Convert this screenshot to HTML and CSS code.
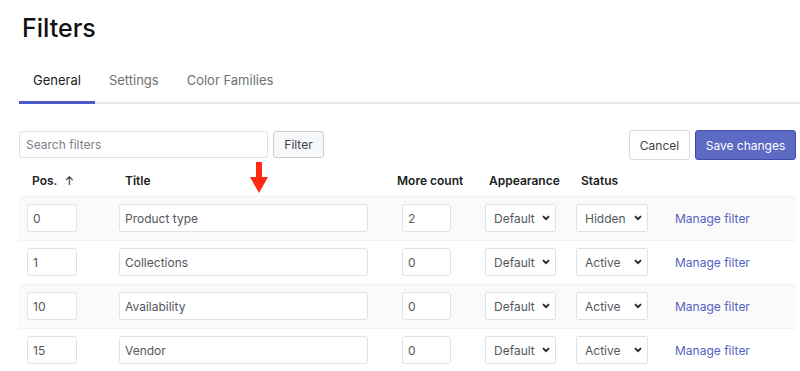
FILE: index.html
```html
<!DOCTYPE html>
<html lang="en">
<head>
  <meta charset="UTF-8" />
  <title>Filters</title>
  <meta name="viewport" content="width=device-width, initial-scale=1.0" />
  <link rel="stylesheet" href="styles.css">
</head>
<body>

  <div class="page">
    <h1>Filters</h1>

    <!-- Tabs -->
    <nav class="tabs">
      <a class="tab active">General</a>
      <a class="tab">Settings</a>
      <a class="tab">Color Families</a>
    </nav>

    <!-- Search + actions -->
    <div class="toolbar">
      <div class="search">
        <input type="text" placeholder="Search filters" />
        <button class="btn">Filter</button>
      </div>
      <div class="actions">
        <button class="btn btn-lg">Cancel</button>
        <button class="btn btn-lg btn-primary">Save changes</button>
      </div>
    </div>

    <div class="table-wrap">
      <svg class="pointer" width="18" height="31" viewBox="0 0 18 31">
        <rect x="6" y="0" width="6" height="16" fill="#ff2a14" />
        <polygon points="0,15 18,15 9,31" fill="#ff2a14" />
      </svg>

      <table class="filters">
        <thead>
          <tr>
            <th class="c-pos">Pos. <span class="sort">&#8593;</span></th>
            <th class="c-title">Title</th>
            <th class="c-more">More count</th>
            <th class="c-app">Appearance</th>
            <th class="c-status">Status</th>
            <th class="c-link"></th>
          </tr>
        </thead>
        <tbody>
          <tr>
            <td><input class="in-pos" value="0" /></td>
            <td><input class="in-title" value="Product type" /></td>
            <td><input class="in-more" value="2" /></td>
            <td>
              <span class="select sel-app">Default
                <svg viewBox="0 0 8 6" width="8" height="6"><path d="M1 1.2 L4 4.2 L7 1.2" /></svg>
              </span>
            </td>
            <td>
              <span class="select sel-status">Hidden
                <svg viewBox="0 0 8 6" width="8" height="6"><path d="M1 1.2 L4 4.2 L7 1.2" /></svg>
              </span>
            </td>
            <td><a class="manage">Manage filter</a></td>
          </tr>
          <tr>
            <td><input class="in-pos" value="1" /></td>
            <td><input class="in-title" value="Collections" /></td>
            <td><input class="in-more" value="0" /></td>
            <td>
              <span class="select sel-app">Default
                <svg viewBox="0 0 8 6" width="8" height="6"><path d="M1 1.2 L4 4.2 L7 1.2" /></svg>
              </span>
            </td>
            <td>
              <span class="select sel-status">Active
                <svg viewBox="0 0 8 6" width="8" height="6"><path d="M1 1.2 L4 4.2 L7 1.2" /></svg>
              </span>
            </td>
            <td><a class="manage">Manage filter</a></td>
          </tr>
          <tr>
            <td><input class="in-pos" value="10" /></td>
            <td><input class="in-title" value="Availability" /></td>
            <td><input class="in-more" value="0" /></td>
            <td>
              <span class="select sel-app">Default
                <svg viewBox="0 0 8 6" width="8" height="6"><path d="M1 1.2 L4 4.2 L7 1.2" /></svg>
              </span>
            </td>
            <td>
              <span class="select sel-status">Active
                <svg viewBox="0 0 8 6" width="8" height="6"><path d="M1 1.2 L4 4.2 L7 1.2" /></svg>
              </span>
            </td>
            <td><a class="manage">Manage filter</a></td>
          </tr>
          <tr>
            <td><input class="in-pos" value="15" /></td>
            <td><input class="in-title" value="Vendor" /></td>
            <td><input class="in-more" value="0" /></td>
            <td>
              <span class="select sel-app">Default
                <svg viewBox="0 0 8 6" width="8" height="6"><path d="M1 1.2 L4 4.2 L7 1.2" /></svg>
              </span>
            </td>
            <td>
              <span class="select sel-status">Active
                <svg viewBox="0 0 8 6" width="8" height="6"><path d="M1 1.2 L4 4.2 L7 1.2" /></svg>
              </span>
            </td>
            <td><a class="manage">Manage filter</a></td>
          </tr>
        </tbody>
      </table>
    </div>
  </div>

</body>
</html>
```

FILE: styles.css
```css
body {
  font-family: 'Inter', 'Noto Sans', sans-serif;
  background: #ffffff;
  color: #212b36;
  margin: 0;
}

.page {
  padding: 12px 4px 0 19px;
}

h1 {
  font-size: 25px;
  font-weight: 500;
  line-height: 32px;
  margin: 0 0 0 3px;
  color: #111;
}

/* tabs */
.tabs {
  display: flex;
  margin-top: 21px;
  border-bottom: 2px solid #e6e7e9;
  margin-right: -4px;
}

.tab {
  font-size: 13px;
  padding: 7px 14px 13px;
  color: #6d7175;
  margin-bottom: -2px;
  border-bottom: 3px solid transparent;
}

.tab.active {
  color: #202223;
  border-bottom-color: #4959c6;
}

/* toolbar */
.toolbar {
  display: flex;
  justify-content: space-between;
  align-items: flex-start;
  margin-top: 26px;
}

.search {
  display: flex;
  gap: 5px;
  padding-top: 1px;
}

.search input {
  width: 249px;
  height: 27px;
  box-sizing: border-box;
  border: 1px solid #dfe3e8;
  border-radius: 3px;
  padding: 0 6px;
  font-family: inherit;
  font-size: 12px;
}

.search input::placeholder {
  color: #7c8087;
}

.actions {
  display: flex;
  gap: 5px;
}

.btn {
  height: 27px;
  width: 51px;
  padding: 0;
  font-family: inherit;
  font-size: 12px;
  color: #3d4347;
  background: #f7f8fa;
  border: 1px solid #c9ced4;
  border-radius: 3px;
}

.btn-lg {
  height: 30px;
  width: 61px;
  background: #fff;
  border-color: #d8dce0;
}

.btn-primary {
  width: 101px;
  background: #5c6ac4;
  border-color: #3f4eae;
  color: #fff;
}

/* table */
.table-wrap {
  position: relative;
  margin-top: 6px;
}

.pointer {
  position: absolute;
  left: 231px;
  top: -4px;
}

.filters {
  border-collapse: collapse;
  width: 777px;
  table-layout: fixed;
  font-size: 12px;
}

.filters th {
  box-sizing: border-box;
  text-align: left;
  font-weight: 600;
  height: 30px;
  padding: 0;
  color: #202223;
}

.filters td {
  height: 43px;
  padding: 0 0 0 8px;
  border-top: 1px solid #f3f3f3;
  white-space: nowrap;
}

.filters tbody tr:nth-child(odd) td {
  background: #fafafa;
}

.filters th.c-pos { width: 92px; padding-left: 13px; }
.filters th.c-title { width: 283px; padding-left: 14px; }
.filters th.c-more { width: 83px; padding-left: 3px; }
.filters th.c-app { width: 91px; padding-left: 12px; }
.filters th.c-status { width: 99px; padding-left: 13px; }

.sort {
  margin-left: 4px;
  font-weight: 400;
}

.filters input {
  height: 28px;
  box-sizing: border-box;
  border: 1px solid #dfe3e8;
  border-radius: 3px;
  padding: 0 5px;
  font-family: inherit;
  font-size: 12px;
  color: #54585c;
  background: #fff;
}

.in-pos { width: 50px; }
.in-title { width: 249px; }
.in-more { width: 49px; }

.select {
  display: flex;
  align-items: center;
  justify-content: space-between;
  height: 28px;
  box-sizing: border-box;
  border: 1px solid #dfe3e8;
  border-radius: 2px;
  background: #fff;
  padding: 0 5px 0 8px;
  color: #54585c;
}

.select svg path {
  fill: none;
  stroke: #222;
  stroke-width: 1.8;
}

.sel-app { width: 71px; }
.sel-status { width: 72px; }

.manage {
  color: #5462c0;
}
```
